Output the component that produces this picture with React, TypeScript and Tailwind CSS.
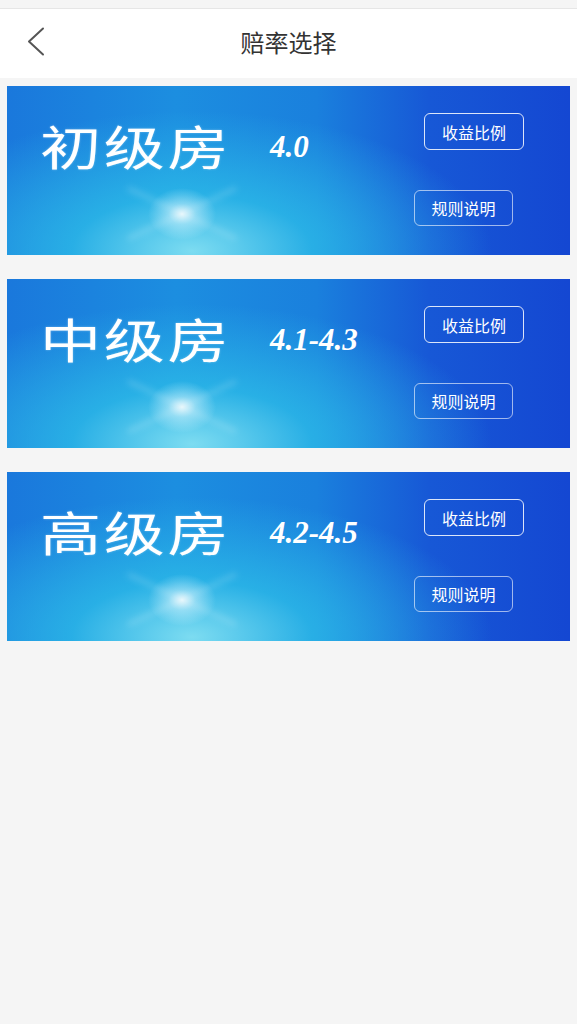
const rooms = [
  { name: "初级房", odds: "4.0" },
  { name: "中级房", odds: "4.1-4.3" },
  { name: "高级房", odds: "4.2-4.5" },
];

function RoomCard({ name, odds }: { name: string; odds: string }) {
  return (
    <div className="relative h-[169px] overflow-hidden flex justify-between bg-[radial-gradient(ellipse_34px_26px_at_175px_128px,rgba(255,255,255,0.85)_0px,rgba(225,248,255,0.45)_40%,rgba(200,245,255,0)_100%),radial-gradient(ellipse_300px_140px_at_185px_165px,rgba(130,224,242,0.95)_0%,rgba(45,190,232,0.75)_40%,rgba(30,150,225,0)_100%),linear-gradient(to_right,#1a78dc_0%,#1c8ee0_30%,#1a80dd_55%,#1758d6_75%,#1447d2_100%)]">
      {/* flare streaks */}
      <div className="absolute left-[115px] top-[126px] w-[120px] h-[3px] rounded-full bg-white/25 blur-[3px] rotate-[25deg]" />
      <div className="absolute left-[115px] top-[126px] w-[120px] h-[3px] rounded-full bg-white/25 blur-[3px] -rotate-[25deg]" />
      <div className="flex items-baseline pl-[33px] pt-[35px]">
        <span className="inline-block origin-left scale-x-[1.3] text-[47px] leading-none text-white tracking-[2px] [text-shadow:0_0_2px_rgba(255,255,255,0.4)] font-['Noto_Sans_CJK_SC',sans-serif]">
          {name}
        </span>
        <span className="ml-[83px] text-[31px] leading-none italic font-bold text-white font-['Liberation_Serif',serif] relative -top-[8px]">
          {odds}
        </span>
      </div>
      <div className="flex flex-col items-end pt-[27px] font-['Noto_Sans_CJK_SC',sans-serif]">
        <button className="mr-[46px] w-[100px] h-[37px] rounded-[6px] border-[1.5px] border-white/85 text-white text-[16px] leading-none">
          收益比例
        </button>
        <button className="mr-[57px] mt-[40px] w-[99px] h-[36px] rounded-[6px] border border-white/60 text-white text-[16px] leading-none">
          规则说明
        </button>
      </div>
    </div>
  );
}

export default function App() {
  return (
    <div className="min-h-[1024px] bg-[#f5f5f5] flex flex-col font-['Noto_Sans_CJK_SC',sans-serif]">
      <div className="h-[9px] bg-[#f5f5f5] border-b border-[#e6e6e6]" />
      <header className="relative h-[69px] bg-white flex items-center justify-center">
        <svg
          className="absolute left-[27px] top-[18px]"
          width="18"
          height="29"
          viewBox="0 0 18 29"
          fill="none"
          stroke="#555"
          strokeWidth="2"
          strokeLinecap="round"
          strokeLinejoin="round"
        >
          <polyline points="16,1.5 2,14.5 16,27.5" />
        </svg>
        <h1 className="text-[24px] text-[#333] -mt-[4px]">赔率选择</h1>
      </header>
      <main className="flex flex-col gap-[24px] px-[7px] pt-[8px]">
        {rooms.map((r) => (
          <RoomCard key={r.name} name={r.name} odds={r.odds} />
        ))}
      </main>
    </div>
  );
}
